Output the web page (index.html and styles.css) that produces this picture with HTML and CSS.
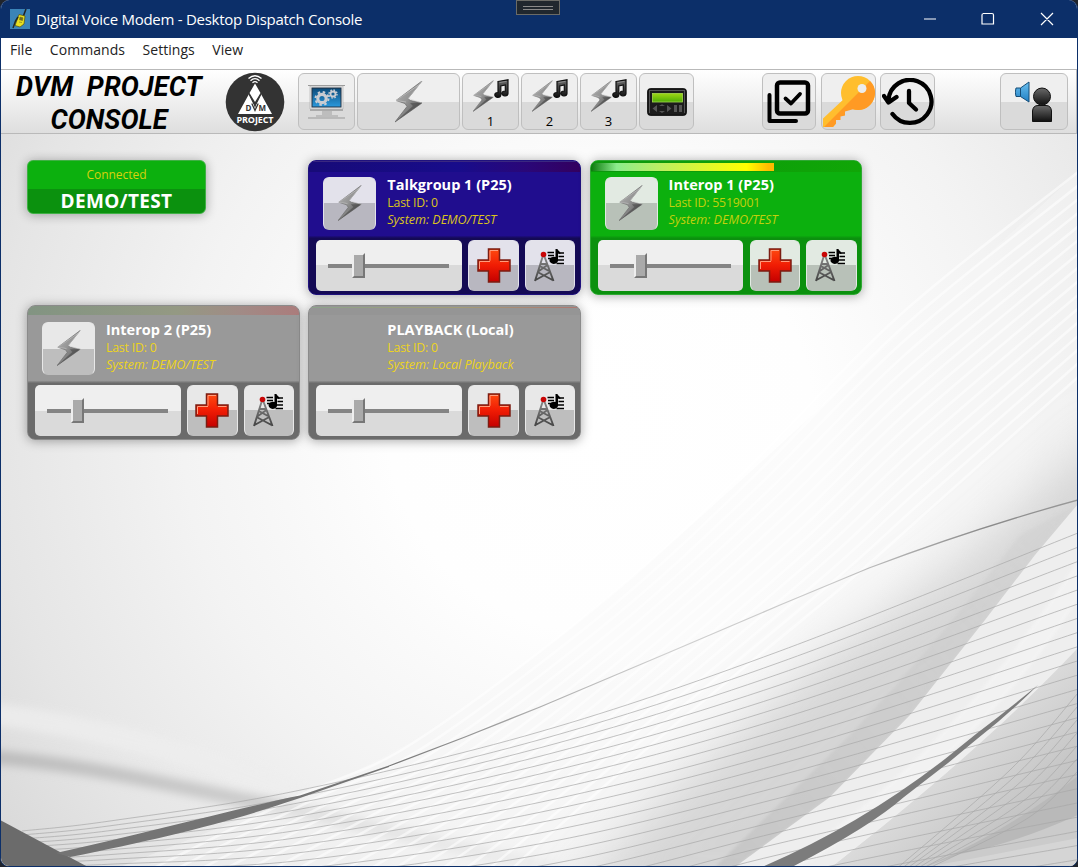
FILE: index.html
```html
<!DOCTYPE html>
<html lang="en">
<head>
<meta charset="utf-8">
<title>Digital Voice Modem - Desktop Dispatch Console</title>
<link rel="stylesheet" href="styles.css">
</head>
<body>
<svg class="defs" aria-hidden="true">
  <defs>
    <linearGradient id="steel" x1="0" y1="0" x2="1" y2="1"><stop offset="0" stop-color="#b5b5b5"/><stop offset=".45" stop-color="#969696"/><stop offset="1" stop-color="#3c3c3c"/></linearGradient>
    <linearGradient id="ink" x1="0" y1="0" x2="0" y2="1"><stop offset="0" stop-color="#6a6a6a"/><stop offset="1" stop-color="#101010"/></linearGradient>
    <linearGradient id="red" x1="0" y1="0" x2="0" y2="1"><stop offset="0" stop-color="#ff4a10"/><stop offset=".5" stop-color="#f01c04"/><stop offset="1" stop-color="#c40000"/></linearGradient>
    <linearGradient id="lcd" x1="0" y1="0" x2="0" y2="1"><stop offset="0" stop-color="#9ed614"/><stop offset="1" stop-color="#4fae06"/></linearGradient>
    <linearGradient id="screen" x1="0" y1="0" x2="0" y2="1"><stop offset="0" stop-color="#0b4a78"/><stop offset="1" stop-color="#2b9ade"/></linearGradient>
    <linearGradient id="cone" x1="0" y1="0" x2="0" y2="1"><stop offset="0" stop-color="#6cc0ee"/><stop offset="1" stop-color="#1f7fc4"/></linearGradient>
    <linearGradient id="mast" x1="0" y1="0" x2="0" y2="1"><stop offset="0" stop-color="#8c8c8c"/><stop offset="1" stop-color="#454545"/></linearGradient>
    <symbol id="bolt" viewBox="0 0 28 42">
      <path d="M27 0 L13 17.500 L15.500 19.500 L27 22 L0 41 L12 25.500 L10 22.500 L1 19.500 Z" fill="url(#steel)" stroke="#6e6e6e" stroke-width=".8"/>
      <path d="M27 0 L13 17.500 L27 22 M11 21 L1 19.500 L25 3" fill="none" stroke="#cfcfcf" stroke-width=".8" opacity=".7"/>
      <path d="M15 22 L27 21.800 L0 41 L18 25 Z" fill="#454545" opacity=".55"/>
    </symbol>
    <symbol id="note" viewBox="0 0 16 19">
      <path d="M5 2.500 L15 .8 V14.500 A3 2.400 0 1 1 12.300 12 V6 L7.800 6.900 V16 A3 2.400 0 1 1 5 13.500 Z" fill="url(#ink)" stroke="#111" stroke-width="1.200"/>
      <path d="M6.500 3.600 L13.500 2.400" stroke="#8a8a8a" stroke-width="1"/>
    </symbol>
    <symbol id="plus" viewBox="0 0 34 35">
      <path d="M11.500 1 H22.500 V12 H33 V23 H22.500 V34 H11.500 V23 H1 V12 H11.500 Z" fill="url(#red)" stroke="#7b1d12" stroke-width="1.500"/>
      <path d="M13 12.800 V2.500 H21 M2.500 21 V13.500 H13 M23 13.500 H31.500" fill="none" stroke="#ff9c7c" stroke-width="1"/>
    </symbol>
    <symbol id="tower" viewBox="0 0 32 34">
      <path d="M9.500 5 L1 32 M9.500 5 L19.500 32 M5.800 17 L15 22 M13.500 16 L3.500 23 M3.500 23 L18.500 31 M16.300 23 L1.500 31 M6.500 15 H13" fill="none" stroke="url(#mast)" stroke-width="1.900"/>
      <circle cx="9.500" cy="5.500" r="2.800" fill="#c80606"/>
      <path d="M13.500 3.500 H20 M14 6.500 H20 M14 9.500 H18 M24.500 4 H30 M24.500 7.500 H30 M23.500 11 H30 M22.500 14.500 H30" stroke="#000" stroke-width="1.600"/>
      <path d="M21.500 0 H23.500 C24 2 26.500 2 26.500 5 L24 4.500 V10.500 A4.300 3.600 0 1 1 21.500 8 Z"/>
    </symbol>
  </defs>
</svg>
<div class="window">
  <header class="titlebar">
    <svg class="app-icon" viewBox="0 0 20 20"><rect width="20" height="20" fill="#3b84b8"/><path d="M13 8 L16 0" stroke="#222" stroke-width="1.500"/><path d="M9 5.500 L15 7 L14 15 L10 18 L5 16.500 Z" fill="#e8e020" stroke="#554f0a" stroke-width=".7"/><path d="M10 8 L13 8.800 L12.500 11.500 L9.500 10.800 Z M9 13 L12 13.500" fill="#6d6b20" stroke="#6d6b20" stroke-width=".6"/><path d="M3 19 L5.500 12 L8 8" stroke="#252a20" stroke-width="1.500" fill="none"/></svg>
    <span class="title">Digital Voice Modem - Desktop Dispatch Console</span>
    <span class="grip"><i></i></span>
    <svg class="controls" viewBox="0 0 132 14"><path d="M1 7 H13 M60 1.500 h9 a1.500 1.500 0 0 1 1.500 1.500 v9 h-11.500 v-9 a1.500 1.500 0 0 1 1.500 -1.500 M118 1 L130 13 M130 1 L118 13" fill="none" stroke="#fff" stroke-width="1.200"/></svg>
  </header>
  <nav class="menu"><span>File</span><span>Commands</span><span>Settings</span><span>View</span></nav>
  <div class="toolbar">
    <div class="brand"><span class="wide">DVM&nbsp; PROJECT</span><span>CONSOLE</span></div>
    <svg class="badge" viewBox="0 0 60 60"><circle cx="30" cy="30" r="29.300" fill="#333"/><g fill="none" stroke="#fff" stroke-width="1.300"><path d="M23.500 6.500 Q30 1 36.500 6.500"/><path d="M25.500 8.700 Q30 4.500 34.500 8.700"/><path d="M27.500 10.700 Q30 8.500 32.500 10.700"/></g><path d="M30 11.500 L35.500 21 L30 30 L24.500 21 Z M24 22 L29.500 33 L30 37 L30.500 33 L36 22 L47 42 H13 Z" fill="#fff"/><path d="M24 22 L30 34 L36 22" fill="none" stroke="#333" stroke-width="1.200"/><path d="M26.800 31.500 L30 38.500 L33.200 31.500" fill="none" stroke="#333" stroke-width="1.300"/><text x="20.500" y="38.500" class="tiny">D</text><text x="33.500" y="38.500" class="tiny">M</text><text x="30" y="51" text-anchor="middle" class="proj" textLength="37">PROJECT</text></svg>
    <div class="tools">
      <button class="tool w57"><svg width="38" height="38" viewBox="0 0 38 38"><path d="M0 2.500 H37 M0 35 H37" stroke="#999" stroke-width="1"/><path d="M2 3 H35 V26 H2 Z" fill="#e9e9e9" stroke="#aaa" stroke-width=".6"/><rect x="4" y="5" width="29" height="19" fill="url(#screen)" stroke="#234"/><path d="M14 27 H24 V32 H30 V34 H8 V32 H14 Z" fill="#bdbdbd"/><path d="M2 27 H35" stroke="#aaa" stroke-width="2"/><circle cx="14" cy="15.500" r="4.200" fill="none" stroke="#c9ccd2" stroke-width="3.200"/><circle cx="14" cy="15.500" r="6.500" fill="none" stroke="#c9ccd2" stroke-width="2" stroke-dasharray="2.500 2.600"/><circle cx="25" cy="11" r="2.500" fill="none" stroke="#c9ccd2" stroke-width="1.800"/><circle cx="25" cy="11" r="4" fill="none" stroke="#c9ccd2" stroke-width="1.400" stroke-dasharray="1.600 1.540"/></svg></button>
      <button class="tool w103"><svg width="28" height="42"><use href="#bolt"/></svg></button>
      <button class="tool w57 tone"><span><svg width="21" height="33"><use href="#bolt"/></svg><svg width="16" height="19"><use href="#note"/></svg></span>1</button>
      <button class="tool w57 tone"><span><svg width="21" height="33"><use href="#bolt"/></svg><svg width="16" height="19"><use href="#note"/></svg></span>2</button>
      <button class="tool w57 tone"><span><svg width="21" height="33"><use href="#bolt"/></svg><svg width="16" height="19"><use href="#note"/></svg></span>3</button>
      <button class="tool w55"><svg width="40" height="28" viewBox="0 0 40 28"><rect x=".7" y=".7" width="38.600" height="26.600" rx="2.500" fill="#1c1c1c" stroke="#000"/><path d="M2 2.500 H38 M2.500 2 V25 M37.500 2 V25" stroke="#555"/><rect x="5.500" y="5.500" width="30" height="8.500" fill="url(#lcd)" stroke="#a8dc50" stroke-width=".8"/><g fill="#555"><path d="M10 17 L5.500 20.500 L10 24 Z M20 17 L24.500 20.500 L20 24 Z M12 18 L15 16.300 L18 18 Z M12 23 L15 25 L18 23 Z"/><rect x="27" y="17" width="3" height="7"/><rect x="32" y="17" width="3" height="7"/></g></svg></button>
    </div>
    <div class="tools mid">
      <button class="tool w54"><svg width="44" height="44" viewBox="0 0 44 44" fill="none" stroke="#000" stroke-linecap="round" stroke-linejoin="round"><rect x="10" y="2.500" width="31" height="31" rx="3" stroke-width="4.500"/><path d="M2.500 15 V41 H29" stroke-width="4"/><path d="M18.500 18.500 L24 23.500 L33 14" stroke-width="3.800"/></svg></button>
      <button class="tool w55"><svg width="53" height="53" viewBox="0 0 53 53"><circle cx="36" cy="18" r="17" fill="#ffbe2e"/><path d="M24 22 L1 43.500 V52 H11 L14 48.500 V45 H18 V41 L23 40 V36 L31 33 L36 27 Z" fill="#ffbe2e"/><path d="M48 6 A17 17 0 0 1 31 34.300 L23 36.500 V40.500 L18.500 41.500 V45 H14 V48.500 L11 52 H2 Z" fill="#ff9a24"/><circle cx="40" cy="13.500" r="4.500" fill="#ececec"/></svg></button>
      <button class="tool w55"><svg width="52" height="48" viewBox="0 0 52 48" fill="none" stroke="#000" stroke-width="4.300" stroke-linecap="round" stroke-linejoin="round"><path d="M6.500 22 A21.500 21.500 0 1 1 10.500 36"/><path d="M2 18 L6.500 24.500 L14.500 19" /><path d="M27 13 V25 L34 31.500"/></svg></button>
    </div>
    <button class="tool w68"><svg width="38" height="42" viewBox="0 0 38 42"><path d="M1 7 H5.500 L14 1 V21 L5.500 15.500 H1 Q-.4 11 1 7 Z M5.500 7 V15.500" fill="url(#cone)" stroke="#154d77" stroke-width="1"/><circle cx="27" cy="15.500" r="8.500" fill="url(#ink)" stroke="#111"/><path d="M17.500 40.500 V30 Q18 24.500 23 24.500 H31 Q36 24.500 36.500 30 V40.500 Z" fill="url(#ink)" stroke="#111"/></svg></button>
  </div>
  <main class="canvas">
    <svg class="backdrop" viewBox="0 134 1078 733" preserveAspectRatio="none">
      <defs>
        <filter id="b1" x="-10%" y="-10%" width="120%" height="120%"><feGaussianBlur stdDeviation="1.500"/></filter>
        <filter id="b3" x="-20%" y="-60%" width="140%" height="220%"><feGaussianBlur stdDeviation="4"/></filter>
        <filter id="b15" x="-30%" y="-30%" width="160%" height="160%"><feGaussianBlur stdDeviation="26"/></filter>
        <radialGradient id="base" gradientUnits="userSpaceOnUse" cx="600" cy="420" r="760"><stop offset="0" stop-color="#fff"/><stop offset=".28" stop-color="#fefefe"/><stop offset=".55" stop-color="#f3f3f3"/><stop offset=".8" stop-color="#e5e5e5"/><stop offset="1" stop-color="#d6d6d6"/></radialGradient>
        <linearGradient id="bandA" gradientUnits="userSpaceOnUse" x1="1078" y1="520" x2="720" y2="867"><stop offset="0" stop-color="#cfcfcf" stop-opacity=".6"/><stop offset="1" stop-color="#bdbdbd"/></linearGradient>
        <linearGradient id="foldC" gradientUnits="userSpaceOnUse" x1="930" y1="740" x2="1030" y2="850"><stop offset="0" stop-color="#e2e2e2"/><stop offset="1" stop-color="#bcbcbc"/></linearGradient>
        <linearGradient id="smoke" gradientUnits="userSpaceOnUse" x1="0" y1="0" x2="560" y2="0"><stop offset="0" stop-color="#bcbcbc"/><stop offset=".45" stop-color="#cccccc"/><stop offset="1" stop-color="#d2d2d2" stop-opacity=".3"/></linearGradient>
        <linearGradient id="hair" gradientUnits="userSpaceOnUse" x1="389" y1="0" x2="1078" y2="0"><stop offset="0" stop-color="#777"/><stop offset=".2" stop-color="#aaa"/><stop offset=".4" stop-color="#d0d0d0"/><stop offset=".65" stop-color="#c8c8c8"/><stop offset=".87" stop-color="#8a8a8a"/><stop offset="1" stop-color="#999"/></linearGradient>
      </defs>
      <rect y="134" width="1078" height="733" fill="url(#base)"/>
      <path d="M-20 712 Q160 735 300 797" fill="none" stroke="#eee" stroke-width="22" filter="url(#b3)" opacity=".8"/>
      <path d="M-20 756 C90 764 180 788 260 803 S400 835 560 870" fill="none" stroke="url(#smoke)" stroke-width="14" filter="url(#b3)"/>
      <path d="M296 797 C420 750 520 670 605 600 S850 380 1078 172 V867 H120 Z" fill="#f7f7f7" opacity=".4"/>
      <path d="M1120 420 L960 560 L820 660 L660 800 L560 910 L830 910 L1000 720 L1120 540 Z" fill="#c9c9c9" opacity=".72" filter="url(#b15)"/>
      <path d="M1078 504 L1020 535 Q940 640 850 735 L715 867 H735 L830 797 L910 715 L985 620 L1040 548 Z" fill="url(#bandA)" opacity=".6" filter="url(#b1)"/>
      <path d="M1078 504 L1035 555 L985 620 L910 715 L830 797 L735 867 H832 C930 790 1010 720 1078 648 Z" fill="#eee"/>
      <path d="M1078 560 C1000 680 900 790 780 867 H800 C930 790 1020 690 1078 600 Z" fill="#f5f5f5" opacity=".7" filter="url(#b1)"/>
      <path d="M1078 648 C1010 720 930 790 832 867 H1078 Z" fill="url(#foldC)"/>
      <path d="M1078 776 Q1010 830 925 867 H1078 Z" fill="#b9b9b9"/>
      <path d="M1078 815 Q1010 845 960 854 L925 867 H1078 Z" fill="#cbcbcb"/>
      <path d="M1078 838 L965 860 L925 867 H1078 Z" fill="#d5d5d5"/>
      <g id="stripes" fill="none" stroke="#fff"></g>
      <g id="threads" fill="none" stroke="#a8a8a8" stroke-width=".7"></g>
      <path d="M0 820 L88 867 H0 Z" fill="#6b6b6b"/>
      <path d="M56 853 C150 832 230 810 300 795.500 L389 765.500 V767 L300 798 C230 822 160 839 70 857 Z" fill="#747474"/>
      <path d="M389 766 L465 737 L540 707 L670 652 L780 605 L869 568 Q975 528 1078 500" fill="none" stroke="url(#hair)" stroke-width="1.300"/>
      <path d="M1038 685 Q1005 712 976 734 L945 759 Q860 825 762 867 H792 Q870 827 904 797 L948 763 L977 739 Q1010 713 1038 685 Z" fill="#7c7c7c"/>
    </svg>
    <div class="board">
      <div class="status"><span class="state">Connected</span><strong class="system">DEMO/TEST</strong></div>
      <article class="card blue"><div class="vu"></div><div class="head"><button class="key"><svg width="24" height="37"><use href="#bolt"/></svg></button><div class="info"><b>Talkgroup 1 (P25)</b><span>Last ID: 0</span><em>System: DEMO/TEST</em></div></div><div class="foot"><div class="slider"><div class="rail"><i></i></div></div><button><svg width="34" height="35"><use href="#plus"/></svg></button><button><svg width="32" height="34"><use href="#tower"/></svg></button></div></article>
      <article class="card green"><div class="vu"><div class="level"></div></div><div class="head"><button class="key"><svg width="24" height="37"><use href="#bolt"/></svg></button><div class="info"><b>Interop 1 (P25)</b><span>Last ID: 5519001</span><em>System: DEMO/TEST</em></div></div><div class="foot"><div class="slider"><div class="rail"><i></i></div></div><button><svg width="34" height="35"><use href="#plus"/></svg></button><button><svg width="32" height="34"><use href="#tower"/></svg></button></div></article>
      <article class="card gray"><div class="vu"></div><div class="head"><button class="key"><svg width="24" height="37"><use href="#bolt"/></svg></button><div class="info"><b>Interop 2 (P25)</b><span>Last ID: 0</span><em>System: DEMO/TEST</em></div></div><div class="foot"><div class="slider"><div class="rail"><i></i></div></div><button><svg width="34" height="35"><use href="#plus"/></svg></button><button><svg width="32" height="34"><use href="#tower"/></svg></button></div></article>
      <article class="card gray local"><div class="vu"></div><div class="head"><div class="key"></div><div class="info"><b>PLAYBACK (Local)</b><span>Last ID: 0</span><em>System: Local Playback</em></div></div><div class="foot"><div class="slider"><div class="rail"><i></i></div></div><button><svg width="34" height="35"><use href="#plus"/></svg></button><button><svg width="32" height="34"><use href="#tower"/></svg></button></div></article>
    </div>
  </main>
</div>
<script src="waves.js"></script>
</body>
</html>
```
FILE: styles.css
```css
* { box-sizing: border-box; }
body { margin: 0; background: #20242c; font-family: "Open Sans", "Noto Sans", sans-serif; overflow: hidden; }
button { padding: 0; margin: 0; font: inherit; }
.defs { position: absolute; width: 0; height: 0; }
.window { width: 1078px; height: 867px; border: 1px solid #0c2f69; border-top: 0; border-radius: 9px; overflow: hidden; display: flex; flex-direction: column; background: #fff; }

.titlebar { position: relative; height: 38px; flex: none; background: #0c2f69; color: #fff; display: flex; align-items: center; padding-left: 9px; }
.app-icon { width: 20px; height: 20px; }
.title { margin-left: 6px; font-size: 15px; letter-spacing: -.27px; white-space: nowrap; line-height: 20px; }
.grip { position: absolute; left: 515px; top: 0; width: 44px; height: 15px; background: #20272e; border: 1px solid #6b6b66; display: grid; place-items: center; }
.grip i { width: 30px; height: 4px; border-top: 1px solid #8a8a8a; border-bottom: 1px solid #8a8a8a; }
.controls { width: 132px; height: 14px; margin-left: auto; margin-right: 22px; }

.menu { height: 31px; flex: none; display: flex; gap: 17.500px; padding: 1px 0 0 9px; font-size: 14px; line-height: 22px; color: #222; letter-spacing: .05px; }

.toolbar { height: 65px; flex: none; display: flex; align-items: flex-start; padding: 3px 8px 0 0; border: 1px solid #b9b9b9; border-width: 1px 1px 1px 0; background: linear-gradient(#fff, #f1f1f1 45%, #dedede); }
.brand { width: 216px; flex: none; display: flex; flex-direction: column; align-items: center; font: italic 700 27px/33px Roboto, sans-serif; color: #000; margin-top: -2px; white-space: nowrap; }
.wide { letter-spacing: .15px; }
.badge { width: 60px; height: 60px; flex: none; margin: -1px 13px 0 8px; }
.tiny { font: 700 8px "Open Sans", sans-serif; fill: #333; }
.proj { font: 700 9px "Open Sans", sans-serif; fill: #fff; }
.tools { display: flex; gap: 2px; }
.tools.mid { margin: 0 auto 0 68px; gap: 4.500px; }
.tool { height: 57px; border: 1px solid #bfbfbf; border-radius: 6px; background: linear-gradient(#efefef 50%, #dadada 50%); display: flex; align-items: center; justify-content: center; overflow: hidden; color: #000; flex: none; }
.w57 { width: 57px; } .w103 { width: 103px; } .w55 { width: 55px; } .w54 { width: 54px; } .w68 { width: 68px; }
.tone { flex-direction: column; justify-content: flex-end; font-size: 13px; line-height: 16px; padding-bottom: 0; }
.tone span { display: flex; height: 35px; align-items: flex-start; margin-bottom: -1px; }
.tone span svg:first-child { margin-top: 1px; }
.tone span svg:last-child { margin-left: -1px; }

.canvas { flex: 1; position: relative; min-height: 0; overflow: hidden; }
.backdrop { position: absolute; left: -1px; top: 0; width: 1078px; height: 733px; }
.board { position: relative; display: grid; grid-template-columns: repeat(3, 272.500px); gap: 10px 8.800px; padding: 26px 0 0 26px; align-items: start; }

.status { width: 179px; height: 54px; border-radius: 6px; border: 1px solid #3fb044; background: linear-gradient(#0cb00e 54%, #0b910e 54%); box-shadow: 0 1px 11px rgba(0,0,0,.32); text-align: center; display: flex; flex-direction: column; }
.state { color: #d8d20c; font-size: 12px; line-height: 16px; padding-top: 6px; letter-spacing: -.02px; }
.system { color: #fff; font-size: 19px; line-height: 24px; margin-top: 6px; letter-spacing: .35px; }

.card { --hi: #e8e8e8; --lo: #bebebe; height: 135px; border-radius: 8px; box-shadow: 0 1px 11px rgba(0,0,0,.34); overflow: hidden; display: flex; flex-direction: column; }
.blue { --hi: #e3e2eb; --lo: #b8b7c0; background: linear-gradient(#200d8e 56%, #140a55 58%); border: 1px solid #20127e; }
.green { --hi: #e2eae2; --lo: #b8c1b8; background: linear-gradient(#0cb00e 56%, #0b910e 58%); border: 1px solid #30a834; }
.gray { background: linear-gradient(#999 56%, #6b6b6b 58%); border: 1px solid #8b8b8b; }
.vu { height: 11px; flex: none; padding-top: 2px; }
.blue .vu { background: linear-gradient(90deg, #170b78, #180c8b 55%, #2a0778 80%, #33005f); border-top: 1px solid #3a2880; }
.green .vu { background: linear-gradient(90deg, #0b970c, #10a607); }
.gray .vu { height: 9px; margin-bottom: 2px; background: linear-gradient(90deg, #829482, #949983 55%, #a18b86 78%, #ab7c7c); }
.gray.local .vu { background: linear-gradient(90deg, #8ca38b, #a29d77 55%, #ae7770) 0 1px / 100% 1px no-repeat #959595; }
.level { width: 183px; height: 8px; background: linear-gradient(90deg, #0b7a0c, #8bec8c 14%, #b9ee66 36%, #ff0 85%, #fb0 97%); }
.head { display: flex; height: 68px; flex: none; padding: 5px 0 0 14px; }
.key { width: 53px; height: 53px; flex: none; }
.card button { border: 1px solid var(--hi); border-radius: 6px; background: linear-gradient(var(--hi) 50%, var(--lo) 50%); display: grid; place-items: center; border-bottom-color: var(--lo); }
.info { margin-left: 11px; display: flex; flex-direction: column; color: #dcc41c; font-size: 12.300px; white-space: nowrap; }
.info b { color: #fff; font-size: 14.500px; line-height: 18px; margin-top: -1px; letter-spacing: 0; }
.info span { line-height: 17px; letter-spacing: -.2px; }
.info em { line-height: 17px; font-size: 12.600px; letter-spacing: -.05px; }
.green .info { color: #c3d00c; }
.gray .info { color: #edd41c; }
.foot { display: flex; padding-left: 7px; gap: 6px; }
.foot button { width: 50.500px; height: 51px; flex: none; }
.slider { width: 145.500px; height: 51px; margin-right: .5px; border-radius: 5px; background: linear-gradient(#efefef 50%, #dadada 50%); display: flex; align-items: center; padding-left: 12px; }
.rail { width: 121px; height: 4px; background: #848484; display: flex; align-items: center; padding-left: 24px; }
.rail i { width: 13px; height: 25px; flex: none; border: 2px solid #eee; border-right-color: #777; border-bottom-color: #777; background: #aaa; }
```
FILE: waves.js
```js
// Draws the two families of curves in the backdrop by blending sets of guide points.
const NS = "http://www.w3.org/2000/svg";

function smooth(points) {
  let d = `M${points[0].join(" ")}`;
  for (let i = 0; i < points.length - 1; i++) {
    const a = points[Math.max(i - 1, 0)], b = points[i];
    const c = points[i + 1], e = points[Math.min(i + 2, points.length - 1)];
    d += `C${b[0] + (c[0] - a[0]) / 6} ${b[1] + (c[1] - a[1]) / 6} ${c[0] - (e[0] - b[0]) / 6} ${c[1] - (e[1] - b[1]) / 6} ${c[0]} ${c[1]}`;
  }
  return d;
}

function add(group, points, attrs) {
  const path = document.createElementNS(NS, "path");
  path.setAttribute("d", smooth(points));
  for (const key in attrs) path.setAttribute(key, attrs[key]);
  document.getElementById(group).appendChild(path);
}

const upper = [[1078, 172], [900, 315], [746, 470], [605, 600], [413, 743], [296, 797], [130, 880]];
const lower = [[1078, 377], [921, 517], [842, 587], [677, 723], [600, 790], [540, 843], [500, 880]];
for (let i = 0; i <= 15; i++) {
  const t = i / 15;
  const points = upper.map((p, k) => [p[0] + (lower[k][0] - p[0]) * t, p[1] + (lower[k][1] - p[1]) * t]);
  add("stripes", points, { "stroke-width": 2.6, opacity: 0.55 });
}

for (let i = 0; i < 24; i++) {
  add("threads", [
    [22, 831 + i * 4], [110, 821 + i * 4.8], [296, 791 + i * 6 + i * i * 0.1],
    [540, 731.7 + i * 7.8 + i * i * 0.128], [780, 651 + i * 11.3], [1078, 533 + i * 14.2]
  ], {});
}

for (let i = 0; i < 7; i++) {
  add("threads", [[1078, 693 + i * 13], [1010 + i * 3, 770 + i * 8], [895 + i * 5, 870]], {});
}
```
